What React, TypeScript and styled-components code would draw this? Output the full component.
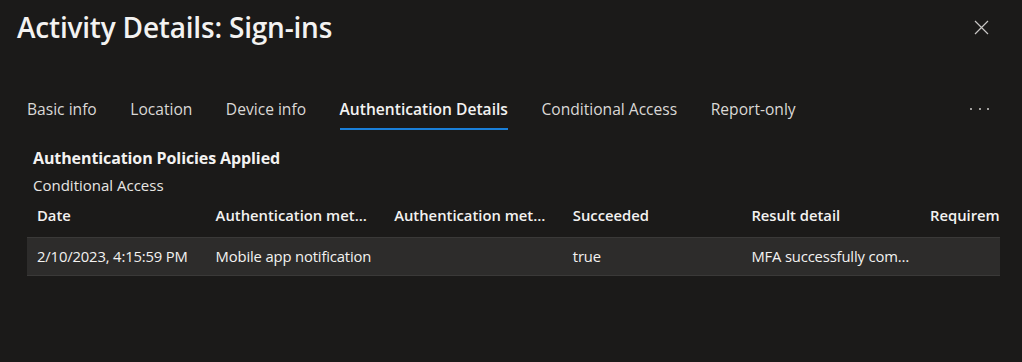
import React from 'react';
import styled, { createGlobalStyle } from 'styled-components';

const GlobalStyle = createGlobalStyle`
  html, body {
    margin: 0;
    padding: 0;
    background: #1b1a19;
  }
  body {
    font-family: "Open Sans", "Noto Sans", sans-serif;
    color: #f3f2f1;
  }
`;

const Panel = styled.div`
  width: 1022px;
  height: 362px;
  overflow: hidden;
  box-sizing: border-box;
  padding: 9px 0 0 0;
`;

const Header = styled.div`
  display: flex;
  align-items: center;
  justify-content: space-between;
  padding: 0 33px 0 17px;
  height: 36px;
`;

const Title = styled.h1`
  margin: 0;
  font-size: 28px;
  line-height: 36px;
  font-weight: 600;
  letter-spacing: -0.2px;
  color: #f3f2f1;
`;

const CloseButton = styled.button`
  background: none;
  border: none;
  padding: 0;
  width: 15px;
  height: 15px;
  display: flex;
  align-items: center;
  justify-content: center;
  cursor: pointer;
`;

const TabBar = styled.div`
  display: flex;
  align-items: stretch;
  margin-top: 47px;
  padding: 0 33px 0 27px;
  height: 38px;
`;

const Tab = styled.div<{ $active?: boolean }>`
  position: relative;
  display: flex;
  align-items: center;
  box-sizing: border-box;
  padding-bottom: 4px;
  margin-right: 33.5px;
  font-size: 15.6px;
  font-weight: ${p => (p.$active ? 600 : 400)};
  color: ${p => (p.$active ? '#f3f2f1' : '#dad8d6')};
  white-space: nowrap;
  &::after {
    content: '';
    display: ${p => (p.$active ? 'block' : 'none')};
    position: absolute;
    left: 0;
    right: 0;
    bottom: 0;
    height: 2px;
    background: #1a7fd8;
  }
`;

const More = styled.div`
  margin-left: auto;
  display: flex;
  align-items: center;
  padding-bottom: 4px;
  gap: 6.5px;
  span {
    width: 2px;
    height: 2px;
    background: #a19f9d;
  }
`;

const Content = styled.div`
  padding: 0 22px 0 27px;
`;

const SectionTitle = styled.h2`
  margin: 17px 0 0 6px;
  font-size: 16px;
  font-weight: 700;
  line-height: 22px;
  letter-spacing: -0.1px;
`;

const SubTitle = styled.div`
  margin: 6px 0 0 6px;
  font-size: 15px;
  line-height: 20px;
  color: #e8e6e4;
`;

const TableWrap = styled.div`
  margin-top: 2px;
  width: 973px;
  overflow: hidden;
`;

const Grid = styled.div`
  display: grid;
  grid-template-columns: repeat(6, 178.6px);
  row-gap: 4px;
  width: max-content;
`;

const HeadCell = styled.div<{ $clip?: boolean }>`
  height: 36px;
  line-height: 36px;
  padding: 0 10px;
  font-size: 14.8px;
  font-weight: 600;
  white-space: nowrap;
  overflow: hidden;
  text-overflow: ${p => (p.$clip ? 'clip' : 'ellipsis')};
  color: #f3f2f1;
`;

const Row = styled.div`
  display: contents;
`;

const Cell = styled.div`
  box-sizing: border-box;
  height: 39px;
  line-height: 37px;
  padding: 0 4px 0 10px;
  font-size: 14.8px;
  letter-spacing: -0.15px;
  white-space: nowrap;
  overflow: hidden;
  text-overflow: ellipsis;
  background: #2d2c2b;
  border-top: 1px solid #3a3938;
  border-bottom: 1px solid #3a3938;
  color: #f3f2f1;
`;

const tabs = ['Basic info', 'Location', 'Device info', 'Authentication Details', 'Conditional Access', 'Report-only'];
const columns = ['Date', 'Authentication method', 'Authentication method detail', 'Succeeded', 'Result detail', 'Requirement'];
const rows = [
  ['2/10/2023, 4:15:59 PM', 'Mobile app notification', '', 'true', 'MFA successfully completed', ''],
];

export default function App() {
  return (
    <>
      <GlobalStyle />
      <Panel>
        <Header>
          <Title>Activity Details: Sign-ins</Title>
          <CloseButton aria-label="Close">
            <svg width="15" height="15" viewBox="0 0 15 15">
              <path d="M1 1 L14 14 M14 1 L1 14" stroke="#c8c6c4" strokeWidth="1.2" fill="none" />
            </svg>
          </CloseButton>
        </Header>
        <TabBar>
          {tabs.map(t => (
            <Tab key={t} $active={t === 'Authentication Details'}>{t}</Tab>
          ))}
          <More><span /><span /><span /></More>
        </TabBar>
        <Content>
          <SectionTitle>Authentication Policies Applied</SectionTitle>
          <SubTitle>Conditional Access</SubTitle>
          <TableWrap>
            <Grid>
              {columns.map((c, i) => (
                <HeadCell key={c} $clip={i === columns.length - 1}>{c}</HeadCell>
              ))}
              {rows.map((r, i) => (
                <Row key={i}>
                  {r.map((v, j) => (
                    <Cell key={j}>{v}</Cell>
                  ))}
                </Row>
              ))}
            </Grid>
          </TableWrap>
        </Content>
      </Panel>
    </>
  );
}
